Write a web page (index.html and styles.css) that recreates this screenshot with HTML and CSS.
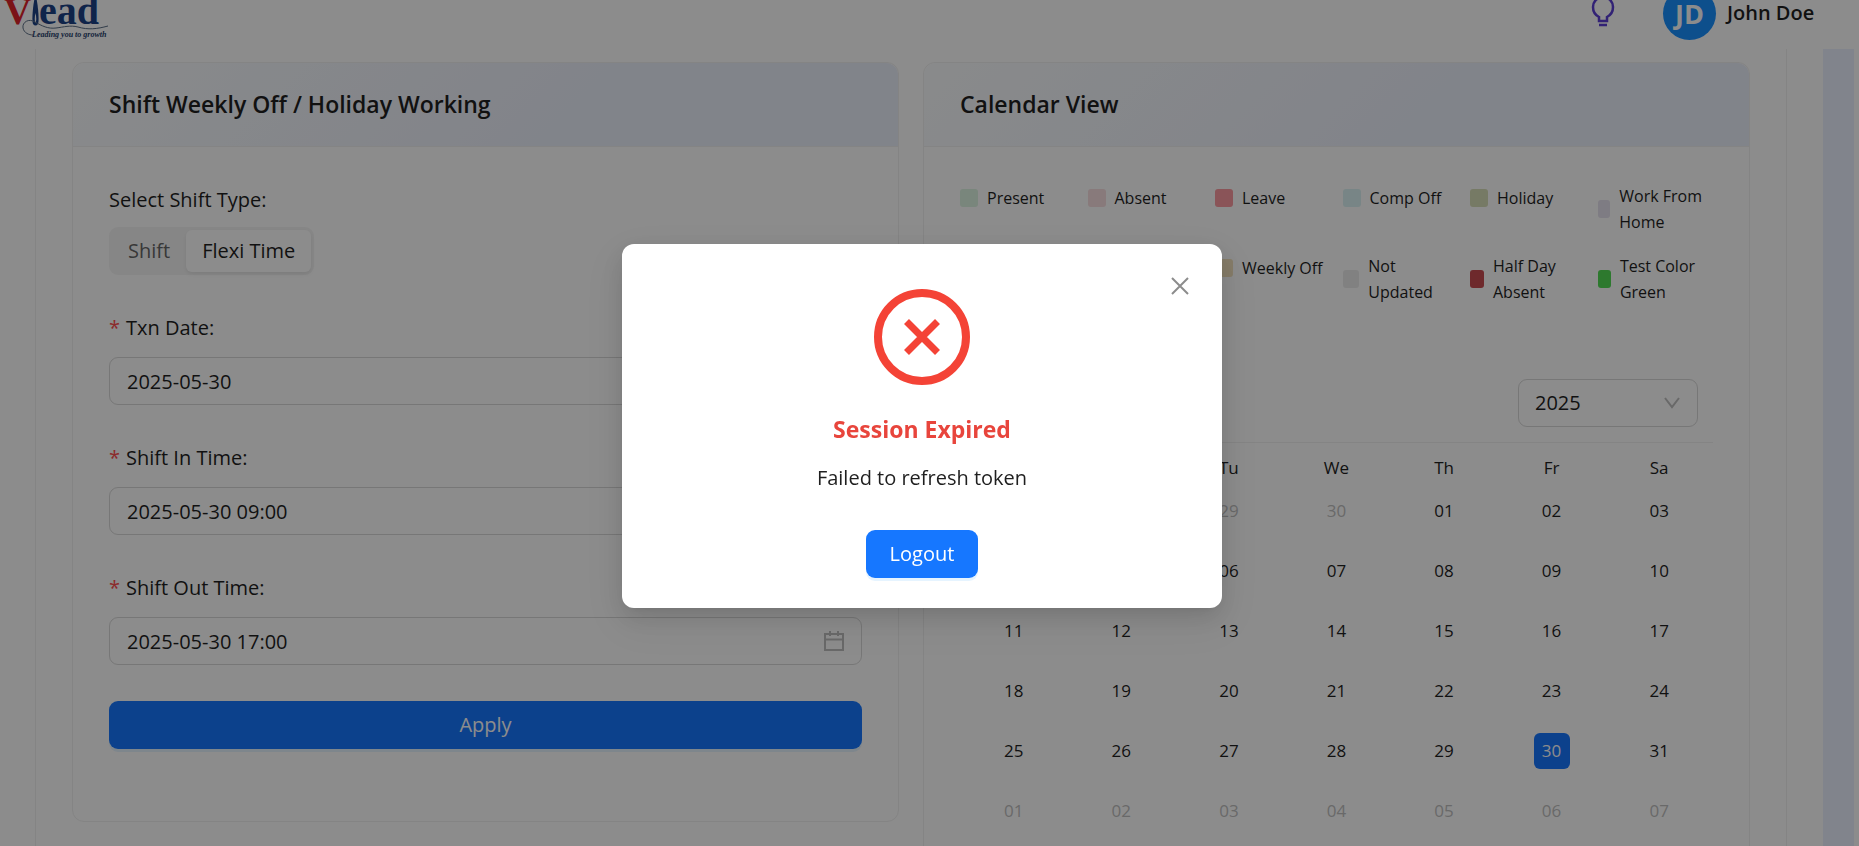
FILE: index.html
```html
<!DOCTYPE html>
<html lang="en">
<head>
<meta charset="utf-8">
<meta name="viewport" content="width=device-width, initial-scale=1">
<title>Shift Weekly Off / Holiday Working</title>
<link rel="stylesheet" href="styles.css">
</head>
<body>
<header class="topbar">
  <svg class="logo" viewBox="0 0 120 49" role="img" aria-label="Vlead, Leading you to growth">
    <text class="logo-v" x="4" y="24">V</text>
    <path d="M35.500 -6C33 4 31.500 20 33 24Q35.500 27 38 24C39.500 20 38 4 35.500 -6Z" fill="#1d4388"/>
    <path d="M35.500 13C34.500 17 34.500 21 35.500 23C36.500 21 36.500 17 35.500 13Z" fill="#fff"/>
    <text class="logo-name" x="39" y="24">ead</text>
    <path d="M35 22C29 18 22 22 23 28C24 33 29 35 33 35M35 22C42 26 48 29 56 28C64 27 70 25 78 27C88 30 97 29 108 26" fill="none" stroke="#5d7088" stroke-width="1"/>
    <text class="logo-tag" x="32" y="37">Leading you to growth</text>
  </svg>
  <div class="topbar-right">
    <button class="icon-button" type="button" aria-label="Tips">
      <svg width="32" height="36" viewBox="0 0 32 36" fill="none" stroke="#5b3fd6" stroke-width="2">
        <path d="M12 26V22C8 20 6 16 6 12a10 10 0 0 1 20 0c0 4-2 8-6 10v4zM12 30h8" stroke-width="2.500"/>
      </svg>
    </button>
    <div class="user"><span class="avatar">JD</span><span class="user-name">John Doe</span></div>
  </div>
</header>

<div class="shell">
  <main class="panel">
    <section class="card card-form">
      <h2 class="card-title">Shift Weekly Off / Holiday Working</h2>
      <form class="card-body form">
        <div class="shift-type" role="radiogroup" aria-labelledby="shift-type">
          <span class="label" id="shift-type">Select Shift Type:</span>
          <div class="segmented">
            <label class="segment"><input type="radio" name="type">Shift</label>
            <label class="segment"><input type="radio" name="type" checked>Flexi Time</label>
          </div>
        </div>
        <div class="field">
          <label class="label required" for="txn">Txn Date:</label>
          <div class="control"><input id="txn" type="text" value="2025-05-30"><svg class="cal-icon" viewBox="0 0 20 20"><path d="M1 3h18v16H1zM1 8.500h18M6 0v5M14 0v5"/></svg></div>
        </div>
        <div class="field">
          <label class="label required" for="in">Shift In Time:</label>
          <div class="control"><input id="in" type="text" value="2025-05-30 09:00"><svg class="cal-icon" viewBox="0 0 20 20"><path d="M1 3h18v16H1zM1 8.500h18M6 0v5M14 0v5"/></svg></div>
        </div>
        <div class="field">
          <label class="label required" for="out">Shift Out Time:</label>
          <div class="control"><input id="out" type="text" value="2025-05-30 17:00"><svg class="cal-icon" viewBox="0 0 20 20"><path d="M1 3h18v16H1zM1 8.500h18M6 0v5M14 0v5"/></svg></div>
        </div>
        <button class="primary" type="button">Apply</button>
      </form>
    </section>

    <section class="card">
      <h2 class="card-title">Calendar View</h2>
      <div class="card-body">
        <ul class="legend">
          <li><i class="swatch present"></i><span>Present</span></li>
          <li><i class="swatch absent"></i><span>Absent</span></li>
          <li><i class="swatch leave"></i><span>Leave</span></li>
          <li><i class="swatch comp"></i><span>Comp Off</span></li>
          <li><i class="swatch holiday"></i><span>Holiday</span></li>
          <li><i class="swatch home"></i><span>Work From Home</span></li>
          <li class="third"><i class="swatch weekly"></i><span>Weekly Off</span></li>
          <li><i class="swatch not-updated"></i><span>Not Updated</span></li>
          <li><i class="swatch half"></i><span>Half Day Absent</span></li>
          <li><i class="swatch test"></i><span>Test Color Green</span></li>
        </ul>
        <div class="calendar">
          <div class="calendar-bar">
            <div class="year">
              <select aria-label="Year"><option>2025</option></select>
              <svg class="chevron" viewBox="0 0 16 12"><path d="M1 1l7 9 7-9"/></svg>
            </div>
          </div>
          <table class="days">
            <thead><tr><th>Su</th><th>Mo</th><th>Tu</th><th>We</th><th>Th</th><th>Fr</th><th>Sa</th></tr></thead>
            <tbody>
              <tr><td class="out">27</td><td class="out">28</td><td class="out">29</td><td class="out">30</td><td>01</td><td>02</td><td>03</td></tr>
              <tr><td>04</td><td>05</td><td>06</td><td>07</td><td>08</td><td>09</td><td>10</td></tr>
              <tr><td>11</td><td>12</td><td>13</td><td>14</td><td>15</td><td>16</td><td>17</td></tr>
              <tr><td>18</td><td>19</td><td>20</td><td>21</td><td>22</td><td>23</td><td>24</td></tr>
              <tr><td>25</td><td>26</td><td>27</td><td>28</td><td>29</td><td><span class="today">30</span></td><td>31</td></tr>
              <tr><td class="out">01</td><td class="out">02</td><td class="out">03</td><td class="out">04</td><td class="out">05</td><td class="out">06</td><td class="out">07</td></tr>
            </tbody>
          </table>
        </div>
      </div>
    </section>
  </main>
  <div class="side-strip"></div>
</div>

<div class="mask">
  <div class="modal" role="dialog" aria-modal="true" aria-labelledby="modal-title">
    <button class="close" type="button" aria-label="Close">
      <svg width="18" height="18" viewBox="0 0 18 18"><path d="M1 1l16 16M17 1L1 17" stroke="#8c8c8c" stroke-width="2"/></svg>
    </button>
    <svg width="96" height="96" viewBox="0 0 96 96" fill="none" stroke="#f44336" stroke-width="8">
      <circle cx="48" cy="48" r="44"/><path d="M32.500 32.500l31 31M63.500 32.500l-31 31" stroke-width="7"/>
    </svg>
    <h1 class="modal-title" id="modal-title">Session Expired</h1>
    <p class="modal-text">Failed to refresh token</p>
    <button class="primary logout" type="button">Logout</button>
  </div>
</div>
</body>
</html>
```
FILE: styles.css
```css
* { box-sizing: border-box; }

body {
  margin: 0;
  height: 100vh;
  overflow: hidden;
  background: #fff;
  color: #1f1f1f;
  font: 20px/32px "Segoe UI", "Open Sans", "Noto Sans", sans-serif;
}

button, input, select { font: inherit; color: inherit; }
h1, h2, p, ul { margin: 0; padding: 0; }

.topbar {
  display: flex;
  justify-content: space-between;
  align-items: center;
  height: 70px;
  margin-top: -21px;
  padding-right: 42px;
}

.logo { width: 120px; height: 49px; align-self: flex-end; overflow: hidden; }
.logo-v, .logo-name { font: bold 38px "Liberation Serif", serif; }
.logo-v { fill: #e0242b; }
.logo-name { fill: #1d4388; font-size: 40px; }
.logo-tag { font: italic bold 8px "Liberation Serif", serif; fill: #26406b; }

.topbar-right { display: flex; align-items: center; gap: 44px; padding-bottom: 2px; }
.icon-button { display: flex; padding: 0; border: 0; background: none; }
.user { display: flex; align-items: center; gap: 11px; }
.avatar {
  width: 53px;
  height: 53px;
  border-radius: 50%;
  background: #1890ff;
  color: #fff;
  font-size: 27px;
  font-weight: 700;
  line-height: 53px;
  text-align: center;
}
.user-name { min-width: 90px; font-weight: 600; }

.shell { display: flex; padding-right: 5px; }
.panel {
  flex: 1;
  display: grid;
  grid-template-columns: 1fr 1fr;
  align-items: start;
  gap: 24px;
  margin: 0 36px 0 35px;
  padding: 13px 36px 36px;
  border: solid #f0f0f0;
  border-width: 0 1px;
}
.side-strip { width: 31px; background: #ecf0ff; }

.card { min-width: 0; border: 1px solid #f0f0f0; border-radius: 12px; }
.card-form { padding-bottom: 36px; }
.card-title {
  padding: 24px 36px;
  border-bottom: 1px solid #f0f0f0;
  border-radius: 12px 12px 0 0;
  background: linear-gradient(135deg, #fafcfe 0%, #ecf0fb 60%);
  font-size: 23px;
  font-weight: 600;
  line-height: 35px;
}
.card-body { padding: 36px; }

.form { display: flex; flex-direction: column; gap: 36px; }
.label { display: block; line-height: 34px; }
.required::before {
  content: "*";
  margin-right: 6px;
  color: #ff4d4f;
}
.shift-type, .field { display: flex; flex-direction: column; align-items: stretch; gap: 12px; }
.shift-type { gap: 10px; }
.segmented {
  display: flex;
  align-self: flex-start;
  padding: 3px;
  border-radius: 9px;
  background: #f5f5f5;
}
.segment {
  padding: 0 16px;
  border-radius: 6px;
  line-height: 42px;
  color: #666;
}
.segment input { position: absolute; opacity: 0; }
.segment:has(:checked) {
  background: #fff;
  color: #1f1f1f;
  box-shadow: 0 2px 4px rgba(0, 0, 0, .08);
}
.control { position: relative; }
.control input {
  display: block;
  width: 100%;
  height: 48px;
  padding: 0 17px;
  border: 1px solid #d9d9d9;
  border-radius: 9px;
  background: #fff;
}
.cal-icon {
  position: absolute;
  top: 14px;
  right: 18px;
  width: 20px;
  height: 20px;
  fill: none;
  stroke: #bfbfbf;
  stroke-width: 2;
}
.primary {
  height: 48px;
  padding: 0 24px;
  border: 0;
  border-radius: 9px;
  background: #1677ff;
  box-shadow: 0 3px 0 rgba(5, 145, 255, .1);
  color: #fff;
}

.legend {
  display: grid;
  grid-template-columns: repeat(6, 1fr);
  grid-auto-rows: 52px;
  align-items: start;
  gap: 18px 12px;
  min-height: 181px;
  list-style: none;
  font-size: 16px;
  line-height: 26px;
}
.legend li { display: flex; align-items: center; gap: 9px; min-height: 30px; }
.third { grid-column-start: 3; }
.swatch { width: 18px; height: 18px; border-radius: 3px; }
.present { background: #dcf5e2; }
.absent { background: #f8dfe0; }
.leave { background: #fb9aa0; }
.comp { background: #daf3f5; }
.holiday { background: #d8dfb8; }
.home { background: #e6e2ef; }
.weekly { background: #f3e3bf; }
.not-updated { background: #ececec; }
.half { background: #c94b51; }
.test { background: #52dd55; }

.calendar { border-radius: 12px; }
.calendar-bar {
  display: flex;
  justify-content: flex-end;
  padding: 15px;
  border-bottom: 1px solid #f0f0f0;
}
.year { position: relative; width: 180px; }
.year select {
  display: block;
  width: 100%;
  height: 48px;
  padding: 0 16px;
  border: 1px solid #d9d9d9;
  border-radius: 9px;
  background: #fff;
  appearance: none;
}
.chevron {
  position: absolute;
  top: 18px;
  right: 18px;
  width: 16px;
  height: 12px;
  fill: none;
  stroke: #bfbfbf;
  stroke-width: 2;
}
.days {
  width: 100%;
  margin: 12px 0 8px;
  border-collapse: collapse;
  table-layout: fixed;
  font-size: 17px;
  line-height: 26px;
  text-align: center;
}
.days th { padding: 0; font-weight: 400; }
.days td { height: 60px; padding: 0; }
.out { color: #bfbfbf; }
.today {
  display: inline-block;
  width: 36px;
  border-radius: 6px;
  background: #1677ff;
  color: #fff;
  line-height: 36px;
}

.mask {
  position: fixed;
  inset: 0;
  display: flex;
  align-items: center;
  justify-content: center;
  padding: 6px 15px 0 0;
  background: rgba(0, 0, 0, .45);
}
.modal {
  position: relative;
  display: flex;
  flex-direction: column;
  align-items: center;
  width: 600px;
  padding: 45px 36px 30px;
  border-radius: 12px;
  background: #fff;
  box-shadow: 0 9px 24px rgba(0, 0, 0, .12), 0 4px 9px -6px rgba(0, 0, 0, .12), 0 14px 42px 12px rgba(0, 0, 0, .05);
  text-align: center;
}
.close {
  position: absolute;
  top: 33px;
  right: 33px;
  display: flex;
  padding: 0;
  border: 0;
  background: none;
}
.modal-title {
  margin-top: 26px;
  color: #e8453c;
  font-size: 23px;
  font-weight: 700;
  line-height: 36px;
}
.modal-text { margin-top: 15px; }
.logout { margin-top: 36px; }
```
